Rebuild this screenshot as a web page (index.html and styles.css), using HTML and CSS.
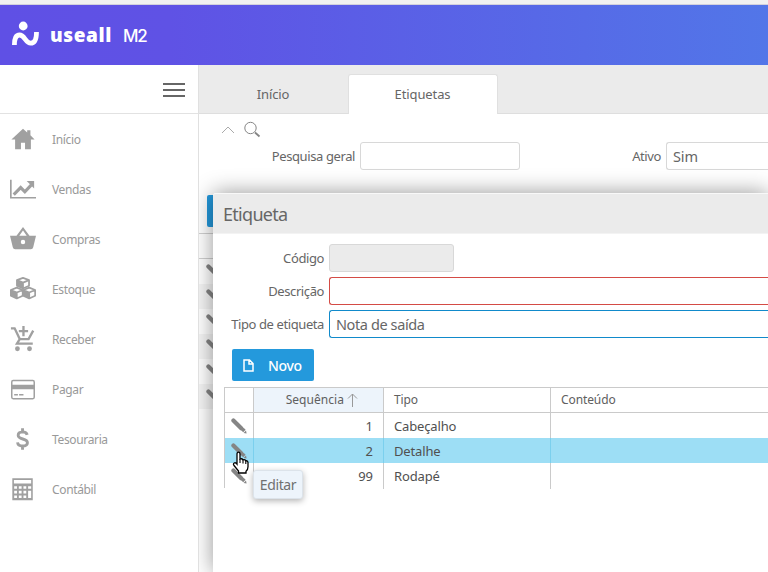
FILE: index.html
```html
<!DOCTYPE html>
<html lang="pt-BR">
<head>
<meta charset="utf-8">
<title>Useall M2 - Etiquetas</title>
<link rel="stylesheet" href="styles.css">
</head>
<body>
<svg class="defs" aria-hidden="true">
  <symbol id="pencil" viewBox="0 0 16 16">
    <path d="M2.400 2.400 10.200 10.200" stroke="currentColor" stroke-width="4.200" stroke-linecap="round"/>
    <path d="m12.600 9.800 2 2-2.400 2.400-2-2zM15 12.600l.6 3-3-.6z" fill="currentColor"/>
  </symbol>
</svg>
<div class="chrome-strip"></div>
<header class="topbar">
  <svg class="logo" width="28" height="25" viewBox="0 0 28 25">
    <circle cx="12.200" cy="5" r="4.400" fill="#fff"/>
    <path d="M3.400 24c0-7 1.600-10 5.200-10 5 0 6 8.200 11 8.200 4.200 0 5.900-4 5.900-11.200" fill="none" stroke="#fff" stroke-width="4.800"/>
  </svg>
  <span class="brand">useall</span><span class="product">M2</span>
</header>
<div class="shell">
  <aside class="sidebar">
    <div class="sidebar-head"><div class="burger"><i></i><i></i><i></i></div></div>
    <nav>
      <a><svg viewBox="0 0 28 28"><path d="M14 3 1.500 14.500H5.500V25h6.300v-7h4.400v7h6.300V14.500h4L22 10V4.500h-3.500V7z"/></svg><span>Início</span></a>
      <a><svg viewBox="0 0 28 28"><path d="M0 4h1.800v18.500H28v1.800H0z"/><path d="m4 20 7.500-7.500L16 17l7-7.500" fill="none" stroke="currentColor" stroke-width="3.400"/><path d="M18 5.500h8v8z"/></svg><span>Vendas</span></a>
      <a><svg viewBox="0 0 28 28"><path fill-rule="evenodd" d="M0 10.500h7L14 1l7 9.500h7L25 23q-.5 2-2.500 2h-17q-2 0-2.500-2zM10 10.500h8L14 4.800zm4 4.300a2.400 2.400 0 1 0 0 4.800 2.400 2.400 0 0 0 0-4.800z"/></svg><span>Compras</span></a>
      <a><svg viewBox="0 0 28 28"><g fill="#fff" stroke="currentColor" stroke-width="1.900" stroke-linejoin="round"><path d="m14 2 6.500 2.500v6L14 13.500 7.500 10.500v-6z"/><path d="m7.500 4.500 6.500 2.700 6.500-2.700M14 7.200v6.300"/><path d="m7.300 12.500 6.400 2.600v6.100l-6.400 3-6.400-3v-6.100zM.9 15.100l6.400 2.700 6.400-2.700M7.300 17.800v6.400M20.700 12.500l6.400 2.600v6.100l-6.400 3-6.400-3v-6.100zM14.300 15.100l6.400 2.700 6.400-2.700M20.700 17.800v6.400"/></g><path d="m7.500 4.500 6.500 2.700v6.300l-6.500-3zM.9 15.100l6.400 2.700v6.400l-6.400-3zM14.300 15.100l6.400 2.700v6.400l-6.400-3z"/></svg><span>Estoque</span></a>
      <a><svg viewBox="0 0 28 28"><g fill="none" stroke="currentColor" stroke-width="2.500"><path d="M1 2.500h4l5.500 11.600h9.500L25 5M10.500 14.100 7.500 19h17M14.500 0v11M9.500 5.500h10"/></g><circle cx="8" cy="24.500" r="2.600"/><circle cx="21" cy="24.500" r="2.600"/></svg><span>Receber</span></a>
      <a><svg viewBox="0 0 28 28"><rect x="1.900" y="4.900" width="24.200" height="19.600" rx="1.500" fill="none" stroke="currentColor" stroke-width="1.600"/><path d="M1.500 9.300h25v5H1.500zM4.500 19.500h4V21h-4zM9.800 19.500h4.700V21H9.800z"/></svg><span>Pagar</span></a>
      <a><svg viewBox="0 0 28 28"><path d="M18.500 9.500Q17.800 6.300 13.500 6.300 8.800 6.500 8.800 10c0 5.500 10 2.500 10 8.200q-.3 3.400-5.300 3.400-4.900 0-5.400-3.900M13.500 2.500v4M13.500 21.500v4" fill="none" stroke="currentColor" stroke-width="3.100"/></svg><span>Tesouraria</span></a>
      <a><svg viewBox="0 0 28 28"><path fill-rule="evenodd" d="M2.500 2.500h22v23.500h-22zM4.200 4.200v4h18.600v-4zM4.500 11v2.800h3V11zm5 0v2.800h3V11zm5 0v2.800h3V11zm5 0v2.800h3.300V11zm-15 5v2.800h3V16zm5 0v2.800h3V16zm5 0v2.800h3V16zm-10 5v2.800h3V21zm5 0v2.800h3V21zm5 0v2.800h3V21zm5-5v7.800h3.300V16z"/></svg><span>Contábil</span></a>
    </nav>
  </aside>
  <main class="main">
    <div class="tabs"><div class="tab">Início</div><div class="tab active">Etiquetas</div></div>
    <div class="tools">
      <svg width="14" height="16" viewBox="0 0 14 16"><path d="m1 12 6-6 6 6" fill="none" stroke="#aaa"/></svg>
      <svg width="17" height="17" viewBox="0 0 17 17"><g fill="none" stroke="#858585"><circle cx="6.500" cy="7" r="5.700"/><path d="m11 11.500 4.500 4" stroke-width="1.800"/></g></svg>
    </div>
    <div class="filters">
      <label class="flabel">Pesquisa geral</label><div class="input search"></div>
      <label class="flabel ativo">Ativo</label><div class="input sim">Sim</div>
    </div>
    <div class="back-button"></div>
    <div class="back-head"></div>
    <div class="back-rows">
      <div><svg><use href="#pencil"/></svg></div><div><svg><use href="#pencil"/></svg></div><div><svg><use href="#pencil"/></svg></div><div><svg><use href="#pencil"/></svg></div><div><svg><use href="#pencil"/></svg></div><div><svg><use href="#pencil"/></svg></div>
    </div>
  </main>
</div>
<section class="modal">
  <h1>Etiqueta</h1>
  <div class="form">
    <label>Código</label><div class="input disabled"></div>
    <label>Descrição</label><div class="input wide error"></div>
    <label>Tipo de etiqueta</label><div class="input wide focus">Nota de saída</div>
  </div>
  <button class="novo"><svg width="11" height="13" viewBox="0 0 11 13"><path d="M1 1h5.500L10 4.500V12H1zM6 1v4h4" fill="none" stroke="#fff" stroke-width="1.500"/></svg><span>Novo</span></button>
  <div class="grid">
    <div class="row head"><div></div><div class="num sorted"><span>Sequência</span><svg width="11" height="15" viewBox="0 0 11 15"><path d="M5.500 14V1M1 5.500 5.500 1 10 5.500" fill="none" stroke="#999"/></svg></div><div>Tipo</div><div>Conteúdo</div></div>
    <div class="row"><div><svg><use href="#pencil"/></svg></div><div class="num">1</div><div>Cabeçalho</div><div></div></div>
    <div class="row selected"><div><svg><use href="#pencil"/></svg></div><div class="num">2</div><div>Detalhe</div><div></div></div>
    <div class="row"><div><svg><use href="#pencil"/></svg></div><div class="num">99</div><div>Rodapé</div><div></div></div>
  </div>
</section>
<div class="tooltip">Editar</div>
<svg class="cursor" width="18" height="23" viewBox="0 0 18 23"><path d="M5 13V3q0-1.800 1.500-1.800T8 3v5q2-.8 3 .8 2-.5 2.800 1 2.200-.3 2.200 2v4q0 3-2 4.500V22H6.500v-2L2 14.500q-1.200-1.700.2-2.500T5 13z" fill="#fff" stroke="#000" stroke-width="1.300"/><path d="M8 8v4M11 9v3.500M13.800 10v3" stroke="#000" stroke-width="1.100"/></svg>
</body>
</html>
```
FILE: styles.css
```css
* { box-sizing: border-box; }
body {
  margin: 0;
  width: 768px;
  height: 572px;
  overflow: hidden;
  position: relative;
  background: #fff;
  color: #666;
  font: 13px "Noto Sans", "Open Sans", sans-serif;
  letter-spacing: -0.4px;
}
.defs { position: absolute; width: 0; height: 0; }
.chrome-strip { height: 5px; background: #f1f1f1; border-bottom: 1px solid #d3d1dc; }
.topbar {
  height: 60px;
  display: flex;
  align-items: center;
  padding: 0 0 4px 11px;
  color: #fff;
  background: linear-gradient(90deg, #5f50e5 0%, #5f52e5 22%, #5276e8 100%);
}
.logo { margin-right: 11px; }
.brand { font: 800 19px/24px "Open Sans", sans-serif; letter-spacing: 0.6px; width: 73px; padding-top: 4px; }
.product { font: 500 17px/24px Inter, sans-serif; letter-spacing: -1.2px; padding-top: 5px; }
.shell { display: flex; height: 507px; }
.sidebar { width: 199px; position: relative; z-index: 2; background: #fff; border-right: 1px solid #e0e0e0; }
.sidebar-head {
  height: 49px;
  display: flex;
  justify-content: flex-end;
  padding: 18px 13px 0 0;
  border-bottom: 1px solid #e2e2e2;
}
.burger { width: 22px; display: flex; flex-direction: column; gap: 4px; }
.burger i { height: 2px; background: #666; }
.sidebar nav { display: flex; flex-direction: column; }
.sidebar a { height: 50px; display: flex; align-items: center; gap: 16px; padding-left: 10px; font-size: 12px; color: #999; letter-spacing: -0.35px; }
.sidebar a svg { width: 26px; height: 26px; fill: currentColor; color: #a0a0a0; }
.main { flex: 1; min-width: 0; display: flex; flex-direction: column; }
.tabs { height: 49px; display: flex; align-items: flex-end; background: #ebebeb; box-shadow: inset 0 -1px #dedede; }
.tab { width: 149px; height: 40px; line-height: 41px; text-align: center; letter-spacing: -0.1px; padding-right: 1px; }
.tab.active { width: 150px; line-height: 39px; background: #fff; border: 1px solid #e0e0e0; border-bottom: 0; border-radius: 3px 3px 0 0; }
.tools { height: 28px; display: flex; gap: 9px; padding: 7px 0 0 22px; }
.filters { display: flex; align-items: center; gap: 5px; height: 28px; }
.flabel { width: 156px; text-align: right; white-space: nowrap; }
.ativo { width: 136px; }
.input { height: 28px; line-height: 27px; border: 1px solid #d8d8d8; border-radius: 3px; background: #fff; padding-left: 6px; font-size: 14.5px; }
.search { width: 160px; }
.sim { flex: 1; border-right: 0; border-radius: 3px 0 0 3px; letter-spacing: -0.1px; }
.back-button { width: 40px; height: 32px; margin: 25px 0 0 8px; border-radius: 2px; background: #2499dc; }
.back-head { margin-top: 6px; height: 26px; border: solid #d0d0d0; border-width: 1px 0; background: #fff; }
.back-rows div { height: 25px; padding: 5px 0 0 7px; }
.back-rows div:nth-child(even) { background: #f5f5f5; }
.back-rows svg, .row svg { display: block; width: 16px; height: 16px; color: #858585; }
.modal {
  position: absolute;
  left: 213px;
  top: 193px;
  width: 555px;
  height: 379px;
  background: #fff;
  border-radius: 3px 0 0 0;
  box-shadow: 0 0 22px rgba(0, 0, 0, 0.42);
}
.modal h1 { margin: 0; height: 41px; padding-left: 10px; border-top: 1px solid #f8f8f8; border-bottom: 1px solid #f3f3f3; border-radius: 3px 0 0; background: #ebebeb; font-size: 18px; line-height: 40px; font-weight: 400; letter-spacing: -0.7px; }
.form { display: grid; grid-template-columns: 111px 1fr; gap: 5px; padding-top: 10px; align-items: center; }
.form label { text-align: right; white-space: nowrap; }
.disabled { width: 125px; background: #ebebeb; }
.wide { border-right: 0; border-radius: 3px 0 0 3px; }
.error { border-color: #d44b45; }
.focus { border-color: #118acb; }
.novo { display: flex; align-items: center; gap: 14px; width: 82px; height: 32px; margin: 11px 0 0 19px; padding: 0 0 0 11px; border: 0; border-radius: 2px; background: #2499dc; color: #fff; font: 500 14px "Noto Sans", sans-serif; letter-spacing: -0.3px; }
.grid { margin: 6px 0 0 11px; border: solid #cacaca; border-width: 1px 0 0 1px; }
.row { display: grid; grid-template-columns: 29px 130px 167px 1fr; height: 25px; line-height: 26px; color: #505050; letter-spacing: -0.15px; }
.row > div { border-right: 1px solid #cacaca; padding-left: 10px; }
.row > div:last-child { border-right: 0; }
.row > div:first-child { padding: 5px 0 0 6px; }
.row .num { display: flex; justify-content: flex-end; padding-right: 10px; letter-spacing: 0; }
.row.head { color: #606060; font-size: 12px; line-height: 24px; border-bottom: 1px solid #cacaca; letter-spacing: -0.1px; }
.row.head .num { align-items: center; gap: 3px; padding-right: 25px; letter-spacing: 0.05px; }
.row .sorted { background: #edf4fb; }
.row .sorted svg { width: 11px; height: 15px; }
.row.selected { background: #9ddef5; }
.row.selected > div { border-color: #7bd0ee; }
.tooltip { position: absolute; left: 253px; top: 470px; width: 50px; height: 29px; line-height: 27px; text-align: center; font-size: 14px; color: #707070; background: #edf4fb; border: 1px solid #dce3ea; border-radius: 3px; box-shadow: 0 2px 6px rgba(0, 0, 0, 0.3); }
.cursor { position: absolute; left: 232px; top: 451px; }
```
